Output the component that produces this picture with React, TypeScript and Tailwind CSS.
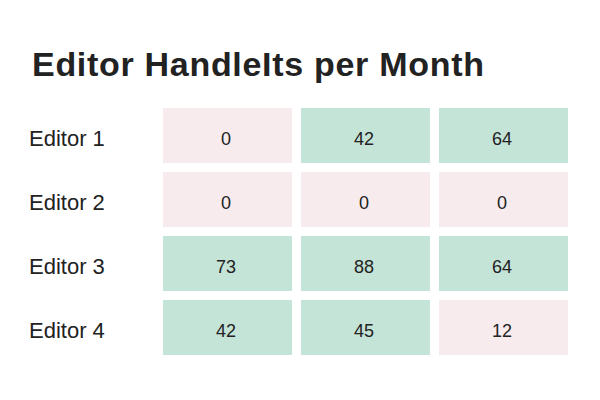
import React from 'react';

type Cell = { value: number; good: boolean };

const rows: { name: string; cells: Cell[] }[] = [
  { name: 'Editor 1', cells: [{ value: 0, good: false }, { value: 42, good: true }, { value: 64, good: true }] },
  { name: 'Editor 2', cells: [{ value: 0, good: false }, { value: 0, good: false }, { value: 0, good: false }] },
  { name: 'Editor 3', cells: [{ value: 73, good: true }, { value: 88, good: true }, { value: 64, good: true }] },
  { name: 'Editor 4', cells: [{ value: 42, good: true }, { value: 45, good: true }, { value: 12, good: false }] },
];

export default function App() {
  return (
    <div
      className="w-[600px] h-[400px] bg-white text-[#222] pl-[32px] pt-[44px]"
      style={{ fontFamily: '"Liberation Sans", Arial, sans-serif' }}
    >
      <h1 className="text-[34px] font-bold leading-[40px] tracking-[0.7px]">Editor HandleIts per Month</h1>
      <div className="grid grid-cols-[125px_129px_129px_129px] auto-rows-[55px] gap-x-[9px] gap-y-[9px] mt-[24px] -ml-[3px]">
        {rows.map((row) => (
          <React.Fragment key={row.name}>
            <div className="flex items-center pt-[6px] text-[22px]">{row.name}</div>
            {row.cells.map((c, i) => (
              <div
                key={i}
                className={`flex items-center justify-center pt-[7px] pr-[3px] text-[18px] ${c.good ? 'bg-[#c5e4d8]' : 'bg-[#f7ebee]'}`}
              >
                {c.value}
              </div>
            ))}
          </React.Fragment>
        ))}
      </div>
    </div>
  );
}
